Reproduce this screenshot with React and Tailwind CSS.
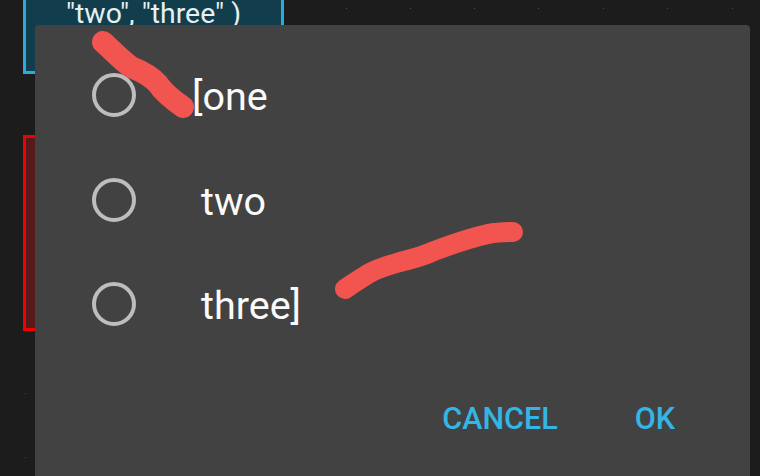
import React from 'react';

const dots = [
  'left-[346px] top-[8px]',
  'left-[410px] top-[8px]',
  'left-[474px] top-[8px]',
  'left-[538px] top-[8px]',
  'left-[603px] top-[8px]',
  'left-[667px] top-[8px]',
  'left-[732px] top-[8px]',
  'left-[25px] top-[393px]',
  'left-[25px] top-[457px]',
];

function Canvas() {
  return (
    <>
      {dots.map((d) => (
        <div key={d} className={`absolute w-px h-px bg-[#4a4a4a] ${d}`} />
      ))}
      <div className="absolute left-[23px] top-[-40px] w-[261px] h-[114px] border-[3px] border-[#29abe2] bg-[#123d4d] flex items-end justify-center">
        <span className="text-[28.4px] leading-[32px] text-[#e6f0f2] pb-[41px] font-['Roboto',sans-serif]">"two", "three" )</span>
      </div>
      <div className="absolute left-[23px] top-[135px] w-[261px] h-[196px] border-[3px] border-[#f00000] bg-[#571a1a]" />
    </>
  );
}

function Option({ label, textClass }) {
  return (
    <div className="flex items-center h-[104.5px]">
      <div className="w-[44px] h-[44px] rounded-full border-4 border-[#bdbdbd] shrink-0" />
      <span className={`text-[39.5px] leading-none text-[#fafafa] pt-[3px] ${textClass}`}>{label}</span>
    </div>
  );
}

export default function App() {
  return (
    <div className="relative w-[760px] h-[476px] overflow-hidden bg-[#1c1c1c] font-['Roboto',sans-serif]">
      <Canvas />

      <div className="absolute left-[35px] top-[25px] w-[715px] h-[480px] bg-[#424242] rounded-[4px] pl-[57px] pt-[18px]">
        <Option label="[one" textClass="ml-[56px]" />
        <Option label="two" textClass="ml-[65px]" />
        <Option label="three]" textClass="ml-[65px]" />
        <div className="flex justify-end items-center gap-[77px] pr-[75px] mt-[47px]">
          <button className="text-[30.5px] leading-none font-medium text-[#33b5e5]">CANCEL</button>
          <button className="text-[30.5px] leading-none font-medium text-[#33b5e5]">OK</button>
        </div>
      </div>

      {/* red marker scribbles on top of the dialog */}
      <svg className="absolute left-0 top-0 pointer-events-none" width="760" height="476" fill="none" stroke="#f25450" strokeLinecap="round" strokeLinejoin="round">
        <path strokeWidth="22" d="M103 42C112 50 121 60 131 67C141 71 151 76 158 84C163 92 173 100 183 107" />
        <path strokeWidth="20" d="M345 289C352 284 360 279 368 274C378 268 390 265 400 262C412 259 424 256 434 251C450 245 470 238 488 234C498 232 505 232 513 232" />
      </svg>
    </div>
  );
}
